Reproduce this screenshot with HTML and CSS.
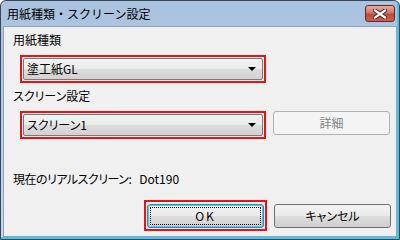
FILE: index.html
```html
<!DOCTYPE html>
<html lang="ja">
<head>
    <meta charset="UTF-8">
    <title>用紙種類・スクリーン設定</title>
    <link rel="stylesheet" href="styles.css">
</head>
<body>
    <div class="window">
        <!-- タイトルバー -->
        <div class="titlebar">
            <span class="title">用紙種類・スクリーン設定</span>
            <div class="close">
                <svg width="14" height="10" viewBox="0 0 14 10">
                    <path d="M2 1.5 L12 8.5 M12 1.5 L2 8.5" stroke="#4a2420" stroke-width="4" stroke-linecap="square"/>
                    <path d="M2 1.5 L12 8.5 M12 1.5 L2 8.5" stroke="#fff" stroke-width="2.2" stroke-linecap="square"/>
                </svg>
            </div>
        </div>

        <div class="client">
            <div class="label">用紙種類</div>
            <div class="row">
                <div class="mark">
                    <div class="combo"><span>塗工紙GL</span><i class="arrow"></i></div>
                </div>
            </div>

            <div class="label">スクリーン設定</div>
            <div class="row">
                <div class="mark">
                    <div class="combo"><span>スクリーン1</span><i class="arrow"></i></div>
                </div>
                <div class="button disabled">詳細</div>
            </div>

            <div class="info">
                <span class="info-name">現在のリアルスクリーン:</span>
                <span>Dot190</span>
            </div>

            <div class="actions">
                <div class="mark">
                    <div class="button default"><span class="focus">OK</span></div>
                </div>
                <div class="button">キャンセル</div>
            </div>
        </div>
    </div>
</body>
</html>
```

FILE: styles.css
```css
body {
    margin: 0;
    font-family: "Noto Sans CJK JP", sans-serif;
    font-size: 12px;
    color: #000;
}
.window {
    width: 400px;
    height: 240px;
    box-sizing: border-box;
    border: 1px solid #3a4656;
    border-radius: 6px 6px 0 0;
    background: linear-gradient(to bottom, #a9c2df, #c3d7ec);
    box-shadow: inset -2px -2px 0 #43c6ea;
    padding: 0 2px 2px 2px;
    display: flex;
    flex-direction: column;
}
.titlebar {
    height: 25px;
    display: flex;
    align-items: flex-start;
}
.title {
    margin: 5px 0 0 4px;
    line-height: 16px;
}
.close {
    margin: 4px 2px 0 auto;
    width: 30px;
    height: 17px;
    box-sizing: border-box;
    border: 1px solid #5e2a26;
    border-radius: 3px;
    background: linear-gradient(to bottom, #e6aa9f 0%, #d47666 45%, #c14a38 55%, #c9604c 100%);
    display: flex;
    align-items: center;
    justify-content: center;
}
.client {
    flex: 1;
    background: #f0f0f0;
    border: 1px solid #8da2bb;
    padding: 5px 0 0 0;
    font-feature-settings: "palt";
}
.label {
    line-height: 16px;
    padding-left: 9px;
    margin-bottom: 7px;
}
.row {
    display: flex;
    align-items: flex-start;
    margin-bottom: 5px;
}
.mark {
    margin-left: 16px;
    border: 2px solid #ee1111;
    padding: 1px;
}
.combo {
    width: 240px;
    height: 22px;
    box-sizing: border-box;
    border: 1px solid #7a7a7a;
    border-radius: 2px;
    background: linear-gradient(to bottom, #f2f2f2 0%, #ebebeb 50%, #dddddd 51%, #d2d2d2 100%);
    display: flex;
    align-items: center;
    padding: 0 6px 0 3px;
    line-height: 16px;
}
.combo span {
    flex: 1;
}
.arrow {
    width: 0;
    height: 0;
    border-left: 4px solid transparent;
    border-right: 4px solid transparent;
    border-top: 4px solid #000;
}
.button {
    width: 117px;
    height: 24px;
    box-sizing: border-box;
    border: 1px solid #707070;
    border-radius: 3px;
    background: linear-gradient(to bottom, #f2f2f2 0%, #ebebeb 50%, #dddddd 51%, #cfcfcf 100%);
    display: flex;
    align-items: center;
    justify-content: center;
    line-height: 16px;
}
.row .button {
    margin-left: 7px;
}
.button.disabled {
    border-color: #adb2b5;
    background: #f4f4f4;
    color: #838383;
}
.button.default {
    border-color: #3c7fb1;
    box-shadow: inset 0 0 0 1px #48d2f7;
    padding: 2px;
}
.focus {
    flex: 1;
    align-self: stretch;
    border: 1px dotted #000;
    display: flex;
    align-items: center;
    justify-content: center;
    letter-spacing: 2px;
}
.info {
    margin-top: 32px;
    padding-left: 9px;
    line-height: 16px;
    display: flex;
    white-space: nowrap;
}
.info-name {
    flex-shrink: 0;
    min-width: 113px;
    margin-right: 8px;
    letter-spacing: -0.5px;
}
.actions {
    display: flex;
    align-items: center;
    justify-content: flex-end;
    gap: 7px;
    margin-top: 13px;
    padding-right: 5px;
}
.actions .button {
    margin-top: 1px;
}
```
